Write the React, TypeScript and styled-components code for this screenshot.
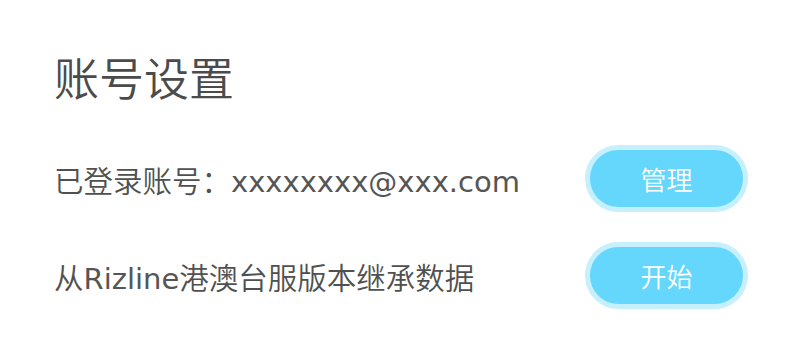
import styled, { createGlobalStyle } from "styled-components";

const GlobalStyle = createGlobalStyle`
	html, body {
		margin: 0;
		padding: 0;
		background: #ffffff;
	}
	body {
		font-family: "Noto Sans CJK SC", sans-serif;
	}
`;

const Page = styled.div`
	width: 800px;
	height: 349px;
	box-sizing: border-box;
	padding: 50px 52px 0 54px;
	display: flex;
	flex-direction: column;
	background: #ffffff;
`;

const Title = styled.h1`
	margin: 0 0 41px;
	font-size: 45px;
	line-height: 54px;
	font-weight: 350;
	color: #4b4b4b;
`;

const List = styled.div`
	display: flex;
	flex-direction: column;
	gap: 30px;
`;

const Row = styled.div`
	display: flex;
	align-items: center;
	justify-content: space-between;
`;

const Label = styled.span`
	font-size: 29.5px;
	font-weight: 350;
	color: #505050;
	white-space: nowrap;
`;

// latin runs inside a label use a wider face than the CJK one
const Latin = styled.span`
	font-family: "DejaVu Sans", sans-serif;
	font-size: 29px;
	font-weight: 400;
	color: #555555;
`;

const Button = styled.button`
	width: 163px;
	height: 67px;
	box-sizing: border-box;
	border: 5px solid #c6f0fd;
	border-radius: 34px;
	background: #65d7fd;
	color: #ffffff;
	font-family: "Noto Sans CJK SC", sans-serif;
	font-size: 26px;
	font-weight: 350;
	padding: 0;
	display: flex;
	align-items: center;
	justify-content: center;
`;

const settings = [
	{ label: "已登录账号：xxxxxxxx@xxx.com", action: "管理" },
	{ label: "从Rizline港澳台服版本继承数据", action: "开始" },
];

const renderLabel = (text: string) =>
	text.split(/([A-Za-z0-9@.]+)/).map((part, i) =>
		i % 2 === 1 ? <Latin key={i}>{part}</Latin> : part
	);

export default function App() {
	return (
		<>
			<GlobalStyle />
			<Page>
				<Title>账号设置</Title>
				<List>
					{settings.map((item) => (
						<Row key={item.action}>
							<Label>{renderLabel(item.label)}</Label>
							<Button>{item.action}</Button>
						</Row>
					))}
				</List>
			</Page>
		</>
	);
}
